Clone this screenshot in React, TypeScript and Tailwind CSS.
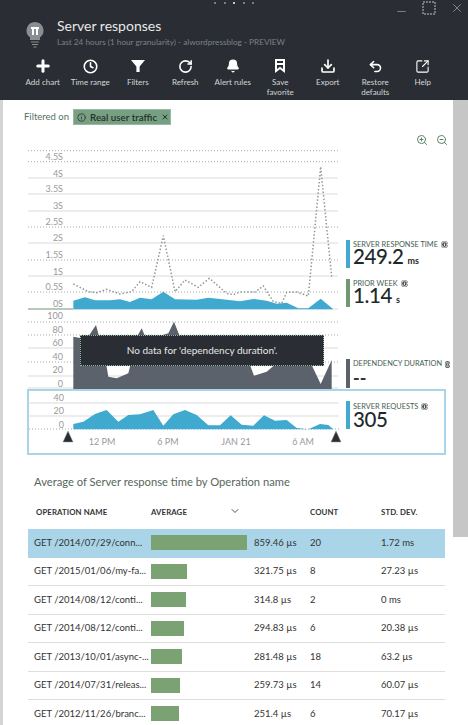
import { Plus, Clock, RotateCw, Bell, Download, Undo2, SquareArrowOutUpRight, ZoomIn, ZoomOut, ChevronDown, X, Minus, Info } from 'lucide-react';

const font = "font-['Lato','Noto_Sans',sans-serif]";

// points are in page coordinates * 3 (read off the zoomed reference)
const toPoints = (pts: number[][], oy: number) =>
  pts.map(([x, y]) => `${x / 3 - 28},${(y + oy) / 3}`).join(' ');

const blueArea = [[220, 538], [220, 512], [255, 502], [285, 511], [330, 511], [360, 508], [390, 516], [420, 503], [455, 508], [490, 485], [525, 508], [590, 509], [625, 503], [660, 507], [720, 514], [760, 507], [800, 512], [830, 521], [860, 518], [895, 535], [925, 535], [962, 506], [1000, 538]];
const priorLine = [[220, 462], [265, 485], [290, 488], [320, 478], [360, 492], [395, 485], [420, 455], [455, 472], [490, 317], [525, 485], [555, 450], [595, 472], [628, 445], [680, 490], [700, 494], [720, 486], [765, 486], [790, 468], [820, 515], [845, 520], [860, 487], [890, 486], [925, 498], [945, 290], [962, 110], [975, 240], [995, 440]];
const grayArea = [[220, 238], [220, 80], [245, 85], [268, 75], [288, 45], [300, 90], [320, 170], [325, 200], [350, 205], [385, 190], [390, 170], [400, 100], [425, 55], [440, 90], [505, 70], [522, 35], [540, 80], [750, 165], [762, 197], [800, 185], [830, 160], [935, 165], [962, 222], [995, 150], [995, 238]];
const requestsArea = [[220, 358], [220, 342], [250, 335], [285, 312], [320, 300], [355, 335], [385, 315], [420, 313], [460, 300], [490, 347], [520, 313], [555, 300], [590, 315], [625, 346], [660, 346], [692, 316], [725, 344], [760, 347], [792, 316], [825, 332], [860, 330], [890, 354], [925, 358], [960, 342], [985, 345], [1000, 358]];

const tools = [
  { icon: <Plus className="w-[18px] h-[18px]" strokeWidth={4} />, lines: ['Add chart'] },
  { icon: <Clock className="w-[15px] h-[15px]" strokeWidth={2.5} />, lines: ['Time range'] },
  {
    icon: (
      <svg viewBox="0 0 14 14" className="w-[14px] h-[14px]" fill="currentColor">
        <path d="M0 1h14L8.6 7.4V13H5.4V7.4z" />
      </svg>
    ),
    lines: ['Filters'],
  },
  { icon: <RotateCw className="w-[15px] h-[15px]" strokeWidth={2.5} />, lines: ['Refresh'] },
  { icon: <Bell className="w-[14px] h-[14px]" fill="currentColor" />, lines: ['Alert rules'] },
  {
    icon: (
      <svg viewBox="0 0 12 14" className="w-[12px] h-[14px]" fill="none" stroke="currentColor" strokeWidth="2">
        <path d="M2 1h8v11L6 9l-4 3zM2 5h8" />
      </svg>
    ),
    lines: ['Save', 'favorite'],
  },
  { icon: <Download className="w-[16px] h-[16px]" strokeWidth={2.5} />, lines: ['Export'] },
  { icon: <Undo2 className="w-[15px] h-[15px]" strokeWidth={2.5} />, lines: ['Restore', 'defaults'] },
  { icon: <SquareArrowOutUpRight className="w-[15px] h-[15px]" strokeWidth={1.75} />, lines: ['Help'] },
];

const rows = [
  { name: 'GET /2014/07/29/conn...', width: 96, avg: '859.46 µs', count: '20', dev: '1.72 ms', selected: true },
  { name: 'GET /2015/01/06/my-fa...', width: 36, avg: '321.75 µs', count: '8', dev: '27.23 µs' },
  { name: 'GET /2014/08/12/conti...', width: 35, avg: '314.8 µs', count: '2', dev: '0 ms' },
  { name: 'GET /2014/08/12/conti...', width: 33, avg: '294.83 µs', count: '6', dev: '20.38 µs' },
  { name: 'GET /2013/10/01/async-...', width: 31, avg: '281.48 µs', count: '18', dev: '63.2 µs' },
  { name: 'GET /2014/07/31/releas...', width: 29, avg: '259.73 µs', count: '14', dev: '60.07 µs' },
  { name: 'GET /2012/11/26/branc...', width: 28, avg: '251.4 µs', count: '6', dev: '70.17 µs' },
];

function Legend({ color, title, value, unit }: { color: string; title: string; value: string; unit?: string }) {
  return (
    <div className="flex h-[28px] gap-[3px]">
      <div className={`w-[4px] h-full ${color}`} />
      <div className="flex flex-col">
        <div className="flex items-center gap-[3px] h-[9px] mt-px text-[7.4px] leading-none text-[#44604f] whitespace-nowrap">
          {title}
          <Info className="w-[7px] h-[7px] text-white bg-[#555] rounded-full" strokeWidth={3} />
        </div>
        <div className="text-[20.5px] leading-[17px] text-[#1e2a2a] whitespace-nowrap font-medium tracking-[-0.4px]">
          {value}
          {unit && <span className="text-[9px] font-bold ml-[4px] tracking-normal">{unit}</span>}
        </div>
      </div>
    </div>
  );
}

function GridLine({ y, dotted }: { y: number; dotted?: boolean }) {
  return dotted ? (
    <line x1="0" x2="310" y1={y} y2={y} stroke="#a8a8a8" strokeWidth="1" strokeDasharray="1 2" />
  ) : (
    <line x1="0" x2="310" y1={y} y2={y} stroke="#dcdcdc" strokeWidth="1.2" />
  );
}

function AxisLabel({ y, children }: { y: number; children: string }) {
  return (
    <text x="35" y={y} textAnchor="end" fontSize="9" fill="#9a9a9a">
      {children}
    </text>
  );
}

export default function App() {
  return (
    <div className={`w-[468px] h-[725px] overflow-hidden bg-white flex flex-col ${font}`}>
      {/* Blade header */}
      <div className="h-[100px] shrink-0 bg-[#2a2d33] text-white relative">
        <div className="flex justify-center gap-[7.5px] pt-[2px]">
          {[0, 1, 2, 3, 4].map((i) => (
            <div key={i} className={`w-[2px] h-[2px] rounded-full ${i === 2 ? 'bg-white' : 'bg-[#9a9a9a]'}`} />
          ))}
        </div>
        <div className="absolute top-px right-[4px] flex items-start gap-[14px] text-[#8e9196]">
          <Minus className="w-[13px] h-[13px] mt-[4px]" strokeWidth={1.5} />
          <svg viewBox="0 0 14 14" className="w-[14px] h-[14px]" fill="none" stroke="currentColor" strokeWidth="1.5" strokeDasharray="2 1">
            <rect x="1" y="1" width="12" height="12" />
          </svg>
          <X className="w-[14px] h-[14px]" strokeWidth={1.5} />
        </div>

        <div className="flex gap-[13px] pl-[26px] pt-[11px]">
          <svg viewBox="0 0 18 26" className="w-[18px] h-[26px] mt-[7px]">
            <path d="M9 0a8.5 8.5 0 0 1 5 15.3V18H4v-2.7A8.5 8.5 0 0 1 9 0z" fill="#8b8e93" />
            <path d="M5 6h8M7 6v7M11 6v7" stroke="#fff" strokeWidth="2" fill="none" />
            <path d="M5 20h8M6 22.5h6M7.5 25h3" stroke="#8b8e93" strokeWidth="1" />
          </svg>
          <div>
            <div className="text-[14px] leading-[22px] text-[#e8e8e8]">Server responses</div>
            <div className="text-[8.2px] leading-[14px] text-[#7d8186] -mt-[2px] whitespace-nowrap">
              Last 24 hours (1 hour granularity) - alwordpressblog - PREVIEW
            </div>
          </div>
        </div>

        <div className="flex pl-[19px] pt-[7px]">
          {tools.map((t) => (
            <div key={t.lines[0]} className="w-[47.5px] flex flex-col items-center">
              <div className="h-[20px] flex items-center justify-center">{t.icon}</div>
              <div className="text-[8px] leading-[10px] mt-[1px] text-center text-[#d4d6d8] whitespace-nowrap">
                {t.lines.map((line) => (
                  <div key={line}>{line}</div>
                ))}
              </div>
            </div>
          ))}
        </div>
      </div>

      <div className="flex flex-1 min-h-0">
        {/* Main blade content */}
        <div className="w-[453px] border-l-[3px] border-[#d4d4d4] flex flex-col">
          <div className="h-[30px] shrink-0 pl-[21px] pt-[9px] flex items-start gap-[4px]">
            <span className="text-[9.5px] leading-[15px] text-[#55705f]">Filtered on</span>
            <div className="h-[16px] w-[98px] bg-[#77a083] border border-[#9ab9a4] flex items-center gap-[4px] pl-[3px] text-[9.8px] font-semibold text-[#26302c] whitespace-nowrap">
              <Info className="w-[9px] h-[9px]" />
              Real user traffic
              <X className="w-[8px] h-[8px]" strokeWidth={3} />
            </div>
          </div>
          <div className="h-[20px] shrink-0 flex items-center justify-end gap-[8px] pr-[5px] text-[#5d8068]">
            <ZoomIn className="w-[12px] h-[12px]" />
            <ZoomOut className="w-[12px] h-[12px]" />
          </div>

          {/* Server response time */}
          <div className="flex pl-[25px] h-[160px] shrink-0">
            <svg width="310" height="160" className="shrink-0" viewBox="0 0 310 160">
              {[
                [0.7, true], [11.7, true], [28, false], [44, false], [61, false], [77, true],
                [93, false], [110, true], [126, false], [142, true], [159, false],
              ].map(([y, d]) => (
                <GridLine key={String(y)} y={y as number} dotted={d as boolean} />
              ))}
              {[['4.5S', 10], ['4S', 26.5], ['3.5S', 42], ['3S', 59], ['2.5S', 75], ['2S', 91], ['1.5S', 108], ['1S', 125], ['0.5S', 140], ['0S', 157]].map(([l, y]) => (
                <AxisLabel key={l as string} y={y as number}>{l as string}</AxisLabel>
              ))}
              <line x1="0" x2="45" y1="159" y2="159" stroke="#7fa587" strokeWidth="1" />
              <polygon points={toPoints(blueArea, -60)} fill="#3fa9d0" />
              <polyline points={toPoints(priorLine, -60)} fill="none" stroke="#8d9a92" strokeWidth="1.5" strokeDasharray="1.5 2" />
            </svg>
            <div className="ml-[8px] flex flex-col justify-end gap-[11px] pb-[3px]">
              <Legend color="bg-[#3fa9d0]" title="SERVER RESPONSE TIME" value="249.2" unit="ms" />
              <Legend color="bg-[#6f9a6f]" title="PRIOR WEEK" value="1.14" unit="s" />
            </div>
          </div>

          {/* Dependency duration */}
          <div className="flex pl-[25px] h-[79px] shrink-0">
            <div className="relative w-[310px] h-[79px] shrink-0">
              <svg width="310" height="79" viewBox="0 0 310 79" className="block">
                {[[12, true], [25, true], [38, false], [52, true], [66, false], [78, false]].map(([y, d]) => (
                  <GridLine key={String(y)} y={y as number} dotted={d as boolean} />
                ))}
                {[['100', 9], ['80', 23], ['60', 36], ['40', 50], ['20', 63], ['0', 77]].map(([l, y]) => (
                  <AxisLabel key={l as string} y={y as number}>{l as string}</AxisLabel>
                ))}
                <polygon points={toPoints(grayArea, 0)} fill="#5b626b" />
              </svg>
              <div className="absolute left-[52px] top-[25px] w-[244px] h-[31px] bg-[#2a2d33] border border-dotted border-[#8fb59a] flex items-center justify-center text-[10px] text-[#e4e8e4]">
                No data for 'dependency duration'.
              </div>
            </div>
            <div className="ml-[8px] flex flex-col justify-end pb-px">
              <div className="flex h-[29px] gap-[3px]">
                <div className="w-[4px] h-full bg-[#5b626b]" />
                <div className="flex flex-col">
                  <div className="flex items-center gap-[3px] h-[9px] mt-px text-[7.4px] leading-none text-[#44604f] whitespace-nowrap">
                    DEPENDENCY DURATION
                    <Info className="w-[5px] h-[7px] text-white bg-[#555] rounded-full" strokeWidth={3} />
                  </div>
                  <div className="text-[18px] leading-[20px] text-[#333] font-bold">--</div>
                </div>
              </div>
            </div>
          </div>

          {/* Server requests, selected chart */}
          <div className="flex ml-[24px] w-[419px] h-[66px] border-2 border-[#a9d5e8] shrink-0">
            <svg width="318" height="62" viewBox="0 0 318 62" className="shrink-0 overflow-visible">
              {[[12, false], [25, false], [38, true]].map(([y, d]) => (
                <GridLine key={String(y)} y={y as number} dotted={d as boolean} />
              ))}
              {[['40', 10], ['20', 23], ['0', 37]].map(([l, y]) => (
                <AxisLabel key={l as string} y={y as number}>{l as string}</AxisLabel>
              ))}
              <g transform="translate(-1 0)">
                <polygon points={toPoints(requestsArea, -243)} fill="#3fa9d0" />
              </g>
              <polygon points="39,40 34,51 44,51" fill="#2a2d33" stroke="#8d9a92" strokeWidth="0.5" />
              <polygon points="307,40 302,51 312,51" fill="#2a2d33" stroke="#8d9a92" strokeWidth="0.5" />
              <g fontSize="9" fill="#9a9a9a" textAnchor="middle">
                <text x="73" y="54">12 PM</text>
                <text x="139" y="54">6 PM</text>
                <text x="207" y="54">JAN 21</text>
                <text x="274" y="54">6 AM</text>
              </g>
            </svg>
            <div className="ml-[-1px] pt-[10px]">
              <Legend color="bg-[#3fa9d0]" title="SERVER REQUESTS" value="305" />
            </div>
          </div>

          {/* Operations table */}
          <div className="pl-[25px] shrink-0">
            <div className="pl-[6px] pt-[19px] h-[52px] text-[11.2px] leading-[15px] text-[#55675c] whitespace-nowrap">
              Average of Server response time by Operation name
            </div>
            <div className="grid grid-cols-[115px_103px_56px_71px_64px] w-[417px] pl-[8px] h-[22px] text-[7.8px] font-bold text-[#333] items-start tracking-[0.1px]">
              <div>OPERATION NAME</div>
              <div className="relative">
                AVERAGE
                <ChevronDown className="absolute left-[78px] top-[-2px] w-[12px] h-[12px] text-[#555]" />
              </div>
              <div />
              <div>COUNT</div>
              <div>STD. DEV.</div>
            </div>
            {rows.map((r, i) => (
              <div
                key={i}
                className={`grid grid-cols-[117px_103px_56px_71px_64px] w-[417px] pl-[6px] h-[28.5px] items-center text-[9.5px] text-[#333] whitespace-nowrap border-b-[1.5px] ${r.selected ? 'bg-[#aad5e8] border-[#aad5e8]' : 'border-[#dedede]'}`}
              >
                <div>{r.name}</div>
                <div className="h-[15px] bg-[#7aa272]" style={{ width: r.width }} />
                <div>{r.avg}</div>
                <div>{r.count}</div>
                <div>{r.dev}</div>
              </div>
            ))}
          </div>
        </div>

        {/* Scrollbar */}
        <div className="w-[15px] flex flex-col">
          <div className="h-[437px] bg-[#c6c6c6]" />
        </div>
      </div>
    </div>
  );
}
